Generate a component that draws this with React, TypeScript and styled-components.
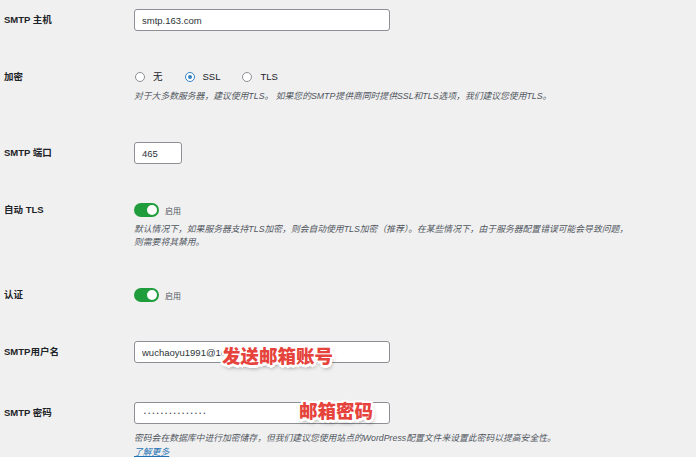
import styled, { createGlobalStyle } from "styled-components";

const GlobalStyle = createGlobalStyle`
  html, body {
    margin: 0;
    padding: 0;
    background: #f0f0f1;
  }
  body {
    font-family: "Liberation Sans", "Noto Sans CJK SC", sans-serif;
    color: #1d2327;
  }
`;

const Page = styled.div`
  width: 696px;
  height: 457px;
  overflow: hidden;
  padding: 9px 0 0 4px;
  box-sizing: border-box;
  display: flex;
  flex-direction: column;
  gap: 39px;
`;

const Row = styled.div<{ $pt?: number }>`
  display: grid;
  grid-template-columns: 130px 1fr;
  align-items: start;
  padding-top: ${p => p.$pt ?? 0}px;
`;

const Label = styled.div<{ $lh: number }>`
  font-size: 9.5px;
  font-weight: 700;
  line-height: ${p => p.$lh}px;
  color: #1d2327;
  white-space: nowrap;
`;

const Field = styled.div`
  position: relative;
  display: flex;
  flex-direction: column;
  align-items: flex-start;
`;

const TextInput = styled.input<{ $w: number }>`
  width: ${p => p.$w}px;
  height: 22px;
  box-sizing: border-box;
  border: 1px solid #8c8f94;
  border-radius: 3px;
  background: #fff;
  padding: 0 7px;
  font-family: "Liberation Sans", "Noto Sans CJK SC", sans-serif;
  font-size: 9.5px;
  color: #2c3338;
  outline: none;
  margin: 0;
`;

const SecretInput = styled(TextInput)`
  font-size: 5px;
  letter-spacing: 2.5px;
  padding-left: 9px;
  color: #3c434a;
`;

const RadioGroup = styled.div`
  display: flex;
  align-items: center;
  height: 12px;
`;

const RadioItem = styled.label`
  display: flex;
  align-items: center;
  gap: 8px;
  font-size: 9.5px;
  line-height: 12px;
  color: #1d2327;
  margin-left: 1px;
  margin-right: 21px;
`;

const RadioDot = styled.span<{ $on?: boolean }>`
  width: 10px;
  height: 10px;
  box-sizing: border-box;
  border-radius: 50%;
  border: 1px solid ${p => (p.$on ? "#3582c4" : "#8c8f94")};
  background: #fff;
  display: flex;
  align-items: center;
  justify-content: center;
  &::after {
    content: "";
    width: 4px;
    height: 4px;
    border-radius: 50%;
    background: ${p => (p.$on ? "#3582c4" : "transparent")};
  }
`;

const Description = styled.p<{ $mt: number; $lh: number }>`
  margin: ${p => p.$mt}px 0 0;
  font-size: 8.8px;
  line-height: ${p => p.$lh}px;
  font-style: italic;
  color: #50575e;
  max-width: 530px;
  white-space: nowrap;
`;

const ToggleRow = styled.div`
  display: flex;
  align-items: center;
  gap: 6px;
  height: 14px;
`;

const Switch = styled.span`
  width: 25px;
  height: 14px;
  border-radius: 7px;
  background: #1f9d3c;
  position: relative;
  &::after {
    content: "";
    position: absolute;
    top: 2px;
    right: 2px;
    width: 10px;
    height: 10px;
    border-radius: 50%;
    background: #fff;
  }
`;

const ToggleText = styled.span`
  font-size: 8px;
  color: #50575e;
`;

const Note = styled.span<{ $left: number; $top: number }>`
  position: absolute;
  left: ${p => p.$left}px;
  top: ${p => p.$top}px;
  font-family: "Noto Sans CJK SC", sans-serif;
  font-size: 18.5px;
  font-weight: 900;
  line-height: 24px;
  color: #e5433b;
  white-space: nowrap;
  text-shadow:
    2.5px 0 0 #fff, -2.5px 0 0 #fff, 0 2.5px 0 #fff, 0 -2.5px 0 #fff,
    2px 2px 0 #fff, -2px -2px 0 #fff, 2px -2px 0 #fff, -2px 2px 0 #fff,
    1px 3px 4px rgba(0, 0, 0, 0.5);
`;

const Link = styled.a`
  font-size: 8.8px;
  line-height: 14px;
  font-style: italic;
  color: #2271b1;
  text-decoration: underline;
`;

export default function App() {
  return (
    <>
      <GlobalStyle />
      <Page>
        <Row>
          <Label $lh={22}>SMTP 主机</Label>
          <Field>
            <TextInput $w={256} readOnly value="smtp.163.com" />
          </Field>
        </Row>

        <Row $pt={1}>
          <Label $lh={12}>加密</Label>
          <Field>
            <RadioGroup>
              <RadioItem>
                <RadioDot />无
              </RadioItem>
              <RadioItem>
                <RadioDot $on />SSL
              </RadioItem>
              <RadioItem>
                <RadioDot />TLS
              </RadioItem>
            </RadioGroup>
            <Description $mt={7} $lh={13}>
              对于大多数服务器，建议使用TLS。 如果您的SMTP提供商同时提供SSL和TLS选项，我们建议您使用TLS。
            </Description>
          </Field>
        </Row>

        <Row>
          <Label $lh={22}>SMTP 端口</Label>
          <Field>
            <TextInput $w={48} readOnly value="465" />
          </Field>
        </Row>

        <Row>
          <Label $lh={14}>自动 TLS</Label>
          <Field>
            <ToggleRow>
              <Switch />
              <ToggleText>启用</ToggleText>
            </ToggleRow>
            <Description $mt={6} $lh={13}>
              默认情况下，如果服务器支持TLS加密，则会自动使用TLS加密（推荐）。在某些情况下，由于服务器配置错误可能会导致问题，
              <br />
              则需要将其禁用。
            </Description>
          </Field>
        </Row>

        <Row>
          <Label $lh={14}>认证</Label>
          <Field>
            <ToggleRow>
              <Switch />
              <ToggleText>启用</ToggleText>
            </ToggleRow>
          </Field>
        </Row>

        <Row>
          <Label $lh={22}>SMTP用户名</Label>
          <Field>
            <TextInput $w={256} readOnly value="wuchaoyu1991@163.com" />
            <Note $left={88} $top={2}>发送邮箱账号</Note>
          </Field>
        </Row>

        <Row>
          <Label $lh={22}>SMTP 密码</Label>
          <Field>
            <SecretInput $w={256} readOnly value="•••••••••••••••" />
            <Note $left={165} $top={-4}>邮箱密码</Note>
            <Description $mt={7} $lh={14}>
              密码会在数据库中进行加密储存，但我们建议您使用站点的WordPress配置文件来设置此密码以提高安全性。
            </Description>
            <Link href="#">了解更多</Link>
          </Field>
        </Row>
      </Page>
    </>
  );
}
